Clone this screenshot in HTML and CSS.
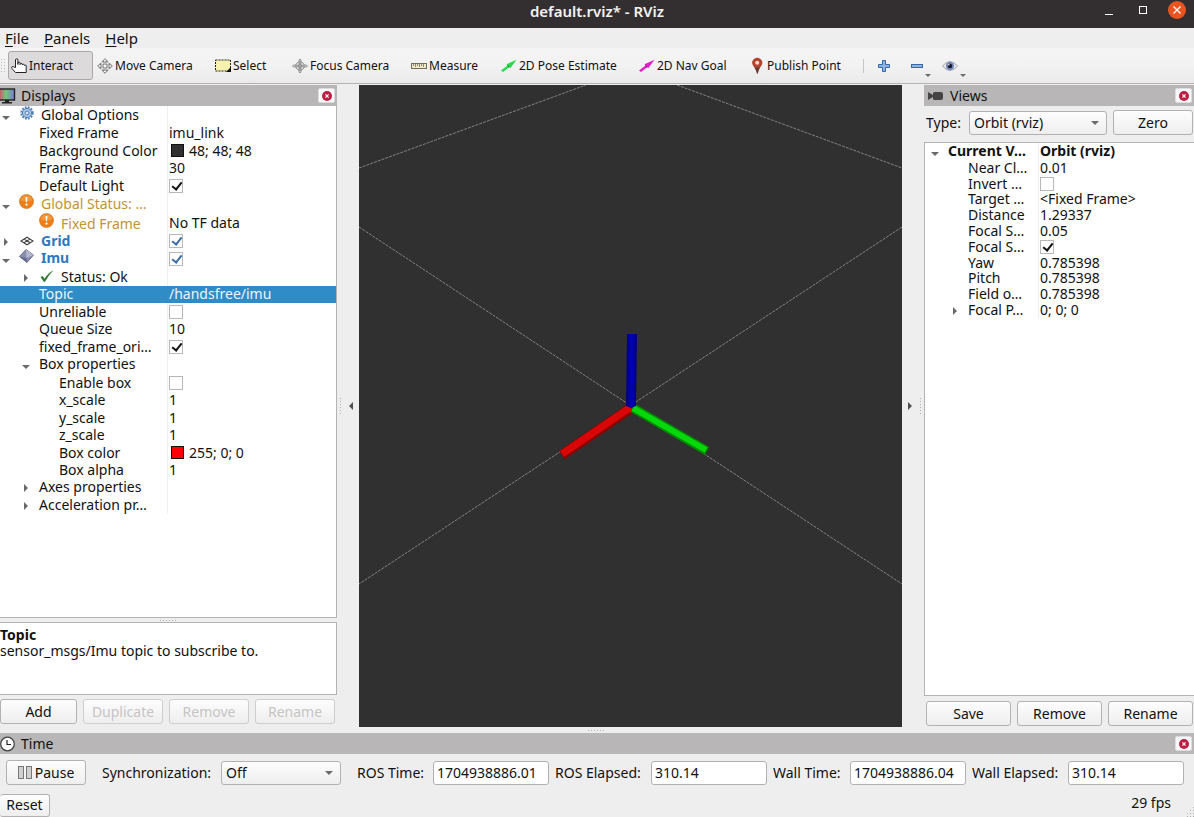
FILE: index.html
```html
<!DOCTYPE html>
<html lang="en">
<head>
<meta charset="utf-8">
<title>default.rviz* - RViz</title>
<link rel="stylesheet" href="styles.css">
</head>
<body>
<svg class="defs" width="0" height="0" aria-hidden="true">
  <defs>
    <symbol id="close" viewBox="0 0 10 10"><circle cx="5" cy="5" r="5" fill="#c01c44"/><path d="M3.4 3.4l3.2 3.2M6.6 3.4L3.4 6.6" stroke="#fff" stroke-width="1.2"/></symbol>
    <symbol id="warn" viewBox="0 0 16 16"><circle cx="8" cy="8" r="7.5" fill="#e9801a" stroke="#c96a10" stroke-width=".6"/><path d="M2 7a6 5.6 0 0 1 12 0q-6 2-12 0z" fill="#f5a04c" opacity=".7"/><path d="M7 3.2h2l-.4 5.6H7.400z" fill="#fff"/><circle cx="8" cy="11.300" r="1.200" fill="#fff"/></symbol>
    <symbol id="down" viewBox="0 0 8 4"><path d="M0 0h8L4 4z" fill="#6a6a6a"/></symbol>
    <symbol id="right" viewBox="0 0 4 8"><path d="M0 0v8l4-4z" fill="#6a6a6a"/></symbol>
  </defs>
</svg>
<div class="window">
  <header class="titlebar">
    <h1 class="title">default.rviz* - RViz</h1>
    <div class="winbtns">
      <button class="winbtn" aria-label="Minimize"><svg width="8" height="10"><path d="M0 9.500h8" stroke="#fff"/></svg></button>
      <button class="winbtn" aria-label="Maximize"><svg width="8" height="8"><rect x=".5" y=".5" width="7" height="7" fill="none" stroke="#fff"/></svg></button>
      <button class="winbtn quit" aria-label="Close"><svg width="8" height="8"><path d="M.5.5l7 7M7.500.5l-7 7" stroke="#fff" stroke-width="1.300"/></svg></button>
    </div>
  </header>
  <nav class="menubar">
    <button class="menu"><u>F</u>ile</button>
    <button class="menu"><u>P</u>anels</button>
    <button class="menu"><u>H</u>elp</button>
  </nav>
  <div class="toolbar">
    <span class="handle"></span>
    <button class="tool active"><svg width="16" height="16" viewBox="0 0 16 16"><path d="M4.500 9.500V2a1.200 1.200 0 0 1 2.400 0v4.500V5.200a1.100 1.100 0 0 1 2.200 0v1.300a1.100 1.100 0 0 1 2.200 0V7a1.100 1.100 0 0 1 2.100 0v.6a1 1 0 0 1 1.800 0V14.500H4.500L1 10.500q-.8-1.500.3-2 1-.4 1.700.7z" fill="#fff" stroke="#222"/></svg>Interact</button>
    <button class="tool"><svg width="16" height="16" viewBox="0 0 16 16"><g fill="#f4f4f4" stroke="#666" stroke-width=".9"><path d="M8 .7L10.800 3.500H9V7h3.500V5.200L15.300 8l-2.800 2.800V9H9v3.500h1.800L8 15.300l-2.800-2.800H7V9H3.500v1.800L.7 8l2.800-2.800V7H7V3.500H5.200z"/></g><ellipse cx="8" cy="8" rx="5" ry="4.500" fill="none" stroke="#999" stroke-width=".7"/></svg>Move Camera</button>
    <button class="tool"><svg width="16" height="14" viewBox="0 0 16 14"><rect x=".5" y="1" width="15" height="11" fill="#f7f1b0" stroke="#222" stroke-dasharray="2 1"/><path d="M16 8v5h-5z" fill="#111"/></svg>Select</button>
    <button class="tool"><svg width="16" height="16" viewBox="0 0 17 16"><g fill="none" stroke="#858585"><circle cx="8.500" cy="8" r="4.500"/><circle cx="8.500" cy="8" r="2"/><path d="M7.500 6V1.500l1-1 1 1V6M7.500 10v4.500l1 1 1-1V10M6 7H1.500L.5 8l1 1H6M11 7h4.500l1 1-1 1H11M5 8h7M8.500 4v8"/></g></svg>Focus Camera</button>
    <button class="tool"><svg width="16" height="8" viewBox="0 0 16 8"><rect x=".5" y="1.500" width="15" height="5" fill="#f2ebc6" stroke="#6f6d62"/><path d="M2.500 2v2M4.500 2v3M6.500 2v2M8.500 2v3M10.500 2v2M12.500 2v3" stroke="#6f6d62" stroke-width=".8"/></svg>Measure</button>
    <button class="tool"><svg width="16" height="14" viewBox="0 0 16 14"><path d="M0 11.500L6.500 6.500 5.500 5.200 15.500.8 9.500 9 8.500 8 2 13z" fill="#27db4c"/><path d="M6.500 6.500l2 1.700" stroke="#127b2c"/></svg>2D Pose Estimate</button>
    <button class="tool"><svg width="16" height="14" viewBox="0 0 16 14"><path d="M0 11.500L6.500 6.500 5.500 5.200 15.500.8 9.500 9 8.500 8 2 13z" fill="#e51fc6"/><path d="M6.500 6.500l2 1.700" stroke="#86106f"/></svg>2D Nav Goal</button>
    <button class="tool"><svg width="14" height="16" viewBox="0 0 14 16"><path d="M6 15.500Q4.500 10 2 7.500a5 5 0 1 1 8.500 0Q7.500 10.500 6.800 15.500z" fill="#b5442f"/><path d="M3.500 9.500h5.500q-1.700 3-2.200 6H6q-.4-3-2.500-6z" fill="#5d4033"/><circle cx="6.200" cy="4.700" r="2" fill="#f8d8cf"/></svg>Publish Point</button>
    <span class="sep"></span>
    <button class="mini" aria-label="Add tool"><svg width="12" height="12"><path d="M4.500.5h3v4h4v3h-4v4h-3v-4h-4v-3h4z" fill="#8db4de" stroke="#3867a8"/></svg></button>
    <button class="mini" aria-label="Remove tool"><svg width="12" height="4"><rect x=".5" y=".5" width="11" height="3" fill="#8db4de" stroke="#3867a8"/></svg><svg class="drop" width="6" height="3"><use href="#down"/></svg></button>
    <button class="mini" aria-label="Visibility"><svg width="16" height="10" viewBox="0 0 16 10"><path d="M.5 5Q8-4 15.500 5 8 14 .5 5z" fill="#e8e8ee" stroke="#a5a5ad"/><circle cx="8" cy="5" r="4" fill="#7286b4"/><circle cx="8" cy="5" r="2.200" fill="#15192c"/><circle cx="6.800" cy="3.800" r=".8" fill="#fff"/></svg><svg class="drop" width="6" height="3"><use href="#down"/></svg></button>
  </div>

  <main class="workspace">
    <section class="dock left">
      <header class="dockhead"><svg width="16" height="16" viewBox="0 0 16 16"><defs><linearGradient id="scr"><stop offset=".25" stop-color="#d05a72"/><stop offset=".55" stop-color="#6fc878"/><stop offset="1" stop-color="#7a7ad8"/></linearGradient></defs><rect x="-5" y="1" width="19.500" height="11" fill="url(#scr)" stroke="#222" stroke-width="1.400"/><path d="M5 12h4v2h3v1.500H2V14h3z" fill="#222"/></svg><h2 class="dockname">Displays</h2><button class="x" aria-label="Close Displays"><svg width="10" height="10"><use href="#close"/></svg></button></header>
      <div class="treebox displays">
        <table class="tree">
          <colgroup><col class="name"><col></colgroup>
          <tr><td class="d1"><i class="tw"><svg width="8" height="4"><use href="#down"/></svg></i><i class="ic"><svg width="14" height="14" viewBox="0 0 14 14"><circle cx="7" cy="7" r="5.700" fill="none" stroke="#4f7fb8" stroke-width="2" stroke-dasharray="1.800 1.200"/><circle cx="7" cy="7" r="4.600" fill="#a9c6e6" stroke="#4f7fb8"/><circle cx="7" cy="7" r="2" fill="#d5e4f4" stroke="#4f7fb8"/></svg></i>Global Options</td><td></td></tr>
          <tr><td class="d2">Fixed Frame</td><td>imu_link</td></tr>
          <tr><td class="d2">Background Color</td><td><i class="swatch gray"></i>48; 48; 48</td></tr>
          <tr><td class="d2">Frame Rate</td><td>30</td></tr>
          <tr><td class="d2">Default Light</td><td><input type="checkbox" class="cb" aria-label="Default Light" checked></td></tr>
          <tr class="amber"><td class="d1"><i class="tw"><svg width="8" height="4"><use href="#down"/></svg></i><i class="ic"><svg width="15" height="15"><use href="#warn"/></svg></i>Global Status: …</td><td></td></tr>
          <tr class="amber"><td class="d2"><i class="ic"><svg width="15" height="15"><use href="#warn"/></svg></i>Fixed Frame</td><td class="plain">No TF data</td></tr>
          <tr class="link"><td class="d1"><i class="tw"><svg width="4" height="8"><use href="#right"/></svg></i><i class="ic"><svg width="14" height="10" viewBox="0 0 14 10"><path d="M1 5l6-3.800L13 5 7 8.800zM4 3l6 3.800M10 3L4 6.800" fill="none" stroke="#444" stroke-width="1.100"/></svg></i>Grid</td><td><input type="checkbox" class="cb blue" aria-label="Grid" checked></td></tr>
          <tr class="link"><td class="d1"><i class="tw"><svg width="8" height="4"><use href="#down"/></svg></i><i class="ic"><svg width="15" height="14" viewBox="0 0 15 14"><path d="M7 .5L14.500 6 8 13.500.5 7.500z" fill="#8b90b0" stroke="#555a72" stroke-width=".8"/><path d="M7 .5L14.500 6l-7 3z" fill="#b4b8d0"/><path d="M.5 7.500l7 1.500L8 13.500z" fill="#666c8c"/></svg></i>Imu</td><td><input type="checkbox" class="cb blue" aria-label="Imu" checked></td></tr>
          <tr><td class="d2 kid"><i class="tw"><svg width="4" height="8"><use href="#right"/></svg></i><i class="ic"><svg width="14" height="12" viewBox="0 0 14 12"><path d="M.5 7l2-1 2 2.800Q8 3 13.500.3 8.500 5 5 11.800H3.800z" fill="#2f7a33"/></svg></i>Status: Ok</td><td></td></tr>
          <tr class="sel"><td class="d2">Topic</td><td>/handsfree/imu</td></tr>
          <tr><td class="d2">Unreliable</td><td><input type="checkbox" class="cb" aria-label="Unreliable"></td></tr>
          <tr><td class="d2">Queue Size</td><td>10</td></tr>
          <tr><td class="d2">fixed_frame_ori…</td><td><input type="checkbox" class="cb" aria-label="fixed_frame_orientation" checked></td></tr>
          <tr><td class="d2 kid"><i class="tw"><svg width="8" height="4"><use href="#down"/></svg></i>Box properties</td><td></td></tr>
          <tr><td class="d3">Enable box</td><td><input type="checkbox" class="cb" aria-label="Enable box"></td></tr>
          <tr><td class="d3">x_scale</td><td>1</td></tr>
          <tr><td class="d3">y_scale</td><td>1</td></tr>
          <tr><td class="d3">z_scale</td><td>1</td></tr>
          <tr><td class="d3">Box color</td><td><i class="swatch red"></i>255; 0; 0</td></tr>
          <tr><td class="d3">Box alpha</td><td>1</td></tr>
          <tr><td class="d2 kid"><i class="tw"><svg width="4" height="8"><use href="#right"/></svg></i>Axes properties</td><td></td></tr>
          <tr><td class="d2 kid"><i class="tw"><svg width="4" height="8"><use href="#right"/></svg></i>Acceleration pr…</td><td></td></tr>
        </table>
      </div>
      <div class="split"><span class="dots"></span></div>
      <div class="help"><b>Topic</b><p class="helptext">sensor_msgs/Imu topic to subscribe to.</p></div>
      <div class="actions">
        <button class="btn">Add</button>
        <button class="btn" disabled>Duplicate</button>
        <button class="btn" disabled>Remove</button>
        <button class="btn" disabled>Rename</button>
      </div>
    </section>
    <div class="gutter lg"><span class="vdots"></span><svg width="4" height="8"><path d="M4 0v8L0 4z" fill="#505050"/></svg></div>
    <div class="scene">
      <svg class="view" viewBox="0 0 543 642" preserveAspectRatio="xMidYMid slice">
        <defs>
          <linearGradient id="bl"><stop offset="0" stop-color="#000078"/><stop offset=".5" stop-color="#0000bc"/><stop offset="1" stop-color="#000078"/></linearGradient>
        </defs>
        <path d="M0 83L227 0M318 0l225 83M0 142l543 357M543 142L0 499" fill="none" stroke="#8a8a8a" stroke-width=".9" stroke-dasharray="3 1"/>
        <path d="M272 323L203 370" stroke="#8c0000" stroke-width="10"/><path d="M272 322L203 369" stroke="#d80606" stroke-width="7"/>
        <path d="M274 323l74 43" stroke="#008c00" stroke-width="9"/><path d="M274 323l73 42" stroke="#06d80c" stroke-width="6"/>
        <path d="M268 249h10l-1 72-5 2-5-2z" fill="url(#bl)"/>
      </svg>
    </div>
    <div class="gutter rg"><svg width="4" height="8"><path d="M0 0v8l4-4z" fill="#505050"/></svg><span class="vdots"></span></div>
    <section class="dock right">
      <header class="dockhead"><svg width="20" height="12" viewBox="0 0 20 12"><path d="M4 2l5 3V3.500Q9 2 10.500 2H17q2 0 2 2v4q0 2-2 2h-6.500Q9 10 9 8.500V7l-5 3z" fill="#444"/></svg><h2 class="dockname">Views</h2><button class="x" aria-label="Close Views"><svg width="10" height="10"><use href="#close"/></svg></button></header>
      <div class="typerow"><label for="vtype">Type:</label><select id="vtype" class="combo"><option>Orbit (rviz)</option></select><button class="btn">Zero</button></div>
      <div class="treebox">
        <table class="tree views">
          <colgroup><col class="vname"><col></colgroup>
          <tr class="bold"><td class="d1"><i class="tw"><svg width="8" height="4"><use href="#down"/></svg></i>Current V…</td><td>Orbit (rviz)</td></tr>
          <tr><td class="d2">Near Cl…</td><td>0.01</td></tr>
          <tr><td class="d2">Invert …</td><td><input type="checkbox" class="cb" aria-label="Invert Z Axis"></td></tr>
          <tr><td class="d2">Target …</td><td>&lt;Fixed Frame&gt;</td></tr>
          <tr><td class="d2">Distance</td><td>1.29337</td></tr>
          <tr><td class="d2">Focal S…</td><td>0.05</td></tr>
          <tr><td class="d2">Focal S…</td><td><input type="checkbox" class="cb" aria-label="Focal Shape Fixed Size" checked></td></tr>
          <tr><td class="d2">Yaw</td><td>0.785398</td></tr>
          <tr><td class="d2">Pitch</td><td>0.785398</td></tr>
          <tr><td class="d2">Field o…</td><td>0.785398</td></tr>
          <tr><td class="d2 kid"><i class="tw"><svg width="4" height="8"><use href="#right"/></svg></i>Focal P…</td><td>0; 0; 0</td></tr>
        </table>
      </div>
      <div class="actions">
        <button class="btn">Save</button>
        <button class="btn">Remove</button>
        <button class="btn">Rename</button>
      </div>
    </section>
  </main>

  <div class="split wide"><span class="dots"></span></div>
  <section class="time">
    <header class="dockhead"><svg width="16" height="16" viewBox="0 0 16 16"><circle cx="7.500" cy="8" r="6.800" fill="#fff" stroke="#444" stroke-width="1.300"/><path d="M7 4v4.500h4" fill="none" stroke="#222" stroke-width="1.200"/></svg><h2 class="dockname">Time</h2><button class="x" aria-label="Close Time"><svg width="10" height="10"><use href="#close"/></svg></button></header>
    <div class="clock">
      <button class="btn"><svg width="15" height="14"><g fill="#d0d0d0" stroke="#777"><rect x=".5" y=".5" width="5" height="12"/><rect x="8.500" y=".5" width="5" height="12"/></g></svg>Pause</button>
      <label class="far" for="sync">Synchronization:</label><select id="sync" class="combo"><option>Off</option></select>
      <label class="far" for="rt">ROS Time:</label><input class="field" id="rt" value="1704938886.01">
      <label for="re">ROS Elapsed:</label><input class="field" id="re" value="310.14">
      <label for="wt">Wall Time:</label><input class="field" id="wt" value="1704938886.04">
      <label for="we">Wall Elapsed:</label><input class="field" id="we" value="310.14">
    </div>
    <footer class="status"><button class="btn reset">Reset</button><span class="fps">29 fps</span><svg class="grip" width="10" height="10"><g stroke="#b0b0b0" stroke-dasharray="1 2"><path d="M9.500 0v10M6.500 3v7M3.500 6v4"/></g></svg></footer>
  </section>
</div>
</body>
</html>
```
FILE: styles.css
```css
* { box-sizing: border-box; }
body { margin: 0; background: #efeeee; color: #111; font: 14px/16px "Noto Sans", "Open Sans", sans-serif; }
button, input, select { font: inherit; color: inherit; margin: 0; }
button { padding: 0; border: 0; background: none; }
svg { flex: none; display: block; overflow: visible; }
h1, h2, p { margin: 0; font-size: inherit; font-weight: inherit; }
.defs { position: absolute; }
.window { height: 100vh; display: flex; flex-direction: column; overflow: hidden; }

.titlebar { height: 28px; flex: none; background: #332f31; color: #f4f2f0; display: grid; grid-template-columns: 1fr auto 1fr; align-items: start; }
.title { grid-column: 2; font-size: 15px; font-weight: 600; line-height: 22px; }
.winbtns { display: flex; justify-content: flex-end; gap: 16px; padding: 1px 8px 0 0; }
.winbtn { width: 18px; height: 18px; display: flex; align-items: center; justify-content: center; }
.quit { background: #e95420; border-radius: 50%; }

.menubar { height: 20px; flex: none; display: flex; gap: 15px; padding: 0 5px; align-items: center; background: #efeeee; font-size: 15px; }
.menu u { text-underline-offset: 2px; }
.toolbar { height: 36px; flex: none; display: grid; grid-template-columns: 7px 85px 117px 76px 118px 89px 137px 111px 114px 2px 35px 30px 34px; column-gap: 1px; align-items: center; border-bottom: 1px solid #b4b2b2; background: linear-gradient(#f5f4f5, #f3f2f3 50%, #ebeaea); font-size: 12px; }
.handle { width: 5px; height: 16px; background: radial-gradient(circle, #bbb 1px, transparent 1px) 0 0 / 3px 3px; }
.tool { height: 29px; padding-left: 2px; display: flex; align-items: center; gap: 2px; white-space: nowrap; border: 1px solid transparent; border-radius: 3px; }
.tool.active { background: #dcdadb; border-color: #a9a7a8; }
.sep { width: 1px; height: 14px; background: #c8c6c6; }
.mini { position: relative; height: 28px; display: flex; align-items: center; justify-content: center; }
.drop { position: absolute; right: 1px; bottom: 3px; }

.workspace { flex: 1; min-height: 0; display: flex; padding-top: 1px; }
.dock { display: flex; flex-direction: column; min-height: 0; flex: none; }
.left { width: 337px; }
.right { width: 270px; }
.dockhead { height: 21px; flex: none; display: flex; align-items: center; gap: 5px; padding-right: 2px; background: #b8b6b6; }
.right .dockhead { gap: 6px; }
.dockname { flex: 1; }
.x { width: 17px; height: 15px; background: #fafafa; border: 1px solid #ddd; border-radius: 2px; display: flex; align-items: center; justify-content: center; }
.treebox { flex: 1; min-height: 0; background: #fff; border: 1px solid #b5b3b3; border-left: 0; overflow: hidden; }
.displays { border-top: 0; }
.right .treebox { border-left: 1px solid #b5b3b3; border-right: 0; }
.tree { width: 100%; height: 408px; border-spacing: 0; table-layout: fixed; }
.views { height: 175px; }
.name { width: 167px; }
.vname { width: 113px; }
.tree td { padding: 0 0 0 1px; height: 14px; white-space: nowrap; line-height: 14px; vertical-align: middle; border-left: 1px solid #efefef; }
.tree td:first-child { border-left: 0; }
.tree td.d1 { padding-left: 0; }
.tree td.d2 { padding-left: 39px; }
.tree td.d2.kid { padding-left: 20px; }
.tree td.d3 { padding-left: 59px; }
.tree.views td.d1 { padding-left: 4px; }
.tree.views td.d2 { padding-left: 43px; }
.tree.views td.d2.kid { padding-left: 24px; }
.tw, .ic { display: inline-flex; align-items: center; justify-content: center; height: 10px; vertical-align: baseline; }
.tw { width: 12px; margin-right: 7px; }
.ic { width: 15px; margin-right: 7px; }
.amber { color: #bf9432; }
.plain { color: #111; }
.link { font-weight: 700; color: #2e78bd; }
.bold { font-weight: 700; }
.sel { background: #308cc6; color: #e8f6ff; }
.tree .sel td { border-color: #308cc6; }
.swatch { display: inline-block; width: 13px; height: 13px; margin: 0 5px 0 2px; border: 1px solid #111; vertical-align: top; }
.gray { background: #303030; }
.red { background: #f00; }
.cb { appearance: none; width: 14px; height: 14px; display: block; border: 1px solid #b8b8b8; background: #fff; }
.cb:checked::after { content: ""; display: block; width: 4px; height: 8px; margin: 0 0 0 4px; border: solid #111; border-width: 0 2px 2px 0; transform: rotate(38deg); }
.cb.blue:checked::after { border-color: #3c6ea5; }

.split { height: 4px; flex: none; display: flex; align-items: center; justify-content: center; }
.wide { height: 6px; }
.dots { width: 18px; height: 1px; background: repeating-linear-gradient(90deg, #b0b0b0 0 1px, transparent 1px 3px); }
.vdots { width: 1px; height: 16px; background: repeating-linear-gradient(#b0b0b0 0 1px, transparent 1px 3px); }
.help { height: 73px; flex: none; padding-top: 4px; background: #fff; border: 1px solid #b5b3b3; border-left: 0; }
.actions { flex: none; display: grid; grid-template-columns: 77fr 80fr 80fr 80fr; gap: 6px; padding: 4px 2px 3px 0; }
.right .actions { grid-template-columns: repeat(3, 1fr); padding: 5px 1px 1px 2px; }
.btn { height: 25px; display: flex; align-items: center; justify-content: center; gap: 2px; border: 1px solid #b3b1b1; border-radius: 3px; background: linear-gradient(#fdfdfd, #efeeee); }
.btn:disabled { color: #c6c4c4; border-color: #cfcdcd; }
.gutter { width: 22px; flex: none; display: flex; align-items: center; justify-content: center; gap: 8px; }
.lg { padding-right: 4px; }
.rg { padding-left: 3px; }
.scene { flex: 1; min-width: 0; background: #303030; }
.view { width: 100%; height: 100%; overflow: hidden; }
.typerow { flex: none; display: grid; grid-template-columns: 37px 1fr 80px; gap: 6px; align-items: center; padding: 4px 1px 7px 2px; }
.combo { appearance: none; width: 100%; height: 24px; padding: 0 4px; border: 1px solid #b3b1b1; border-radius: 3px; background: url("data:image/svg+xml,%3Csvg xmlns='http://www.w3.org/2000/svg' width='8' height='4'%3E%3Cpath d='M0 0h8L4 4z' fill='%236a6a6a'/%3E%3C/svg%3E") no-repeat right 7px center, linear-gradient(#fdfdfd, #efeeee); }
.time { flex: none; }
.clock { display: grid; grid-template-columns: 80px 135px 120px 92px 1fr 102px 1fr 83px 1fr 102px 1fr; align-items: center; padding: 6px 10px 0 6px; }
.clock label { padding-left: 6px; white-space: nowrap; }
.clock .far { padding-left: 16px; }
.field { width: 100%; min-width: 0; height: 24px; padding: 0 3px; border: 1px solid #b3b1b1; border-radius: 3px; background: #fff; }
.status { display: flex; align-items: center; justify-content: flex-end; gap: 13px; height: 32px; padding-top: 8px; }
.reset { width: 50px; height: 23px; margin-right: auto; border-left: 0; }
.fps { padding-bottom: 4px; }
.grip { align-self: flex-end; }
```
